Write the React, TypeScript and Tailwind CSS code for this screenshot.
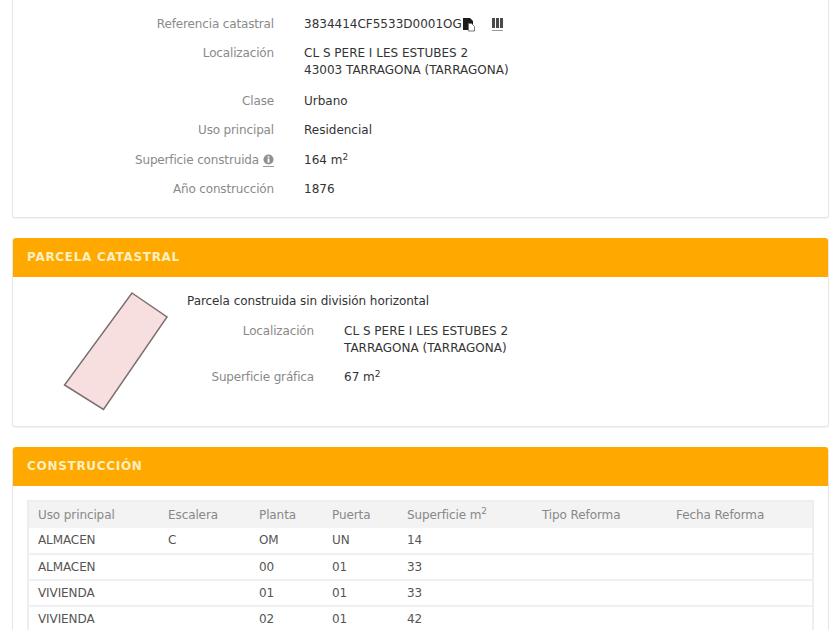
const font = "font-['DejaVu_Sans',sans-serif]"

const Row = ({ label, children, info, gap = "mb-[12px]" }: { label: string; children: React.ReactNode; info?: boolean; gap?: string }) => (
  <div className={`flex ${gap}`}>
    <div className="w-[261px] flex-none text-right text-[#8a8a8a] tracking-[-0.15px] flex justify-end items-center gap-1 h-[17px]">
      {label}
      {info && (
        <span className="inline-flex border-b border-[#999] pb-px">
          <svg width="11" height="11" viewBox="0 0 12 12">
            <circle cx="6" cy="6" r="5.5" fill="#8f8f8f" />
            <rect x="5" y="5" width="2" height="4.5" fill="#fff" />
            <rect x="5" y="2.5" width="2" height="1.6" fill="#fff" />
          </svg>
        </span>
      )}
    </div>
    <div className="ml-[30px] text-[#333]">{children}</div>
  </div>
)

const Head = ({ children }: { children: React.ReactNode }) => (
  <div className="h-[39px] bg-[#ffa800] rounded-t-[3px] flex items-center pl-[14px] text-[#fdf0c0] font-bold text-[12px] tracking-[0.7px]">
    {children}
  </div>
)

const rows = [
  ["ALMACEN", "C", "OM", "UN", "14"],
  ["ALMACEN", "", "00", "01", "33"],
  ["VIVIENDA", "", "01", "01", "33"],
  ["VIVIENDA", "", "02", "01", "42"],
]

const Sup2 = () => <sup className="text-[9px] leading-none">2</sup>

export default function App() {
  return (
    <div className={`${font} h-[630px] w-[840px] overflow-hidden bg-white text-[12px] leading-[17px] pl-3 pr-[11px]`}>
      <section className="h-[218px] border border-t-0 border-[#e6e6e6] rounded-b-[3px] pt-[16px] shadow-[0_1px_1px_rgba(0,0,0,0.05)]">
        <Row label="Referencia catastral">
          <span className="flex items-center">
            3834414CF5533D0001OG
            <svg className="ml-0" width="15" height="15" viewBox="0 0 15 15">
              <path d="M1 1h7l3 3v9H1z" fill="#1c1c1c" />
              <path d="M6.5 6.5h3l3 3v4.5h-6z" fill="#fff" stroke="#777" strokeWidth="1" />
            </svg>
            <svg className="ml-[14px]" width="13" height="15" viewBox="0 0 13 15">
              <path d="M1 1h3v10H1zM5 1h3v10H5zM9 1h3v10H9z" fill="#4a4a4a" />
              <path d="M1 13h11v1H1z" fill="#999" />
            </svg>
          </span>
        </Row>
        <Row label="Localización" gap="mb-[14px]">
          CL S PERE I LES ESTUBES 2
          <br />
          43003 TARRAGONA (TARRAGONA)
        </Row>
        <Row label="Clase">Urbano</Row>
        <Row label="Uso principal" gap="mb-[13px]">Residencial</Row>
        <Row label="Superficie construida" info>
          164 m<Sup2 />
        </Row>
        <Row label="Año construcción">1876</Row>
      </section>

      <section className="mt-5 h-[189px] border border-[#e6e6e6] border-t-0 rounded-[3px] shadow-[0_1px_1px_rgba(0,0,0,0.05)]">
        <Head>PARCELA CATASTRAL</Head>
        <div className="flex">
          <svg className="ml-[50px] mt-[14px] flex-none" width="106" height="120" viewBox="0 0 106 120">
            <path d="M69 2L104 26L40.5 118.5L1.5 94Z" fill="#f7dfdf" stroke="#7a7070" strokeWidth="1.5" />
          </svg>
          <div className="ml-[18px] pt-[16px]">
            <div className="text-[#333] mb-[13px] tracking-[-0.07px]">Parcela construida sin división horizontal</div>
            <div className="flex mb-[12px]">
              <div className="w-[127px] text-right text-[#8a8a8a] tracking-[-0.15px]">Localización</div>
              <div className="ml-[30px] text-[#333]">
                CL S PERE I LES ESTUBES 2
                <br />
                TARRAGONA (TARRAGONA)
              </div>
            </div>
            <div className="flex">
              <div className="w-[127px] text-right text-[#8a8a8a] tracking-[-0.15px]">Superficie gráfica</div>
              <div className="ml-[30px] text-[#333]">
                67 m<Sup2 />
              </div>
            </div>
          </div>
        </div>
      </section>

      <section className="mt-5 border border-[#e6e6e6] border-t-0 rounded-[3px]">
        <Head>CONSTRUCCIÓN</Head>
        <div className="px-[14px] pt-[14px]">
          <table className="w-[787px] table-fixed border-collapse border-2 border-[#eeeeee] text-[#555] tracking-[-0.1px]">
            <thead>
              <tr className="bg-[#f3f3f3] h-[27px] text-left text-[#888]">
                <th className="font-normal w-[140px] pl-[9px]">Uso principal</th>
                <th className="font-normal w-[91px]">Escalera</th>
                <th className="font-normal w-[73px]">Planta</th>
                <th className="font-normal w-[75px]">Puerta</th>
                <th className="font-normal w-[135px]">
                  Superficie m<Sup2 />
                </th>
                <th className="font-normal w-[134px]">Tipo Reforma</th>
                <th className="font-normal">Fecha Reforma</th>
              </tr>
            </thead>
            <tbody>
              {rows.map((r, i) => (
                <tr key={i} className="h-[26px] border-b-2 border-[#f0f0f0]">
                  <td className="pl-[9px]">{r[0]}</td>
                  <td>{r[1]}</td>
                  <td>{r[2]}</td>
                  <td>{r[3]}</td>
                  <td>{r[4]}</td>
                  <td></td>
                  <td></td>
                </tr>
              ))}
            </tbody>
          </table>
        </div>
      </section>
    </div>
  )
}
